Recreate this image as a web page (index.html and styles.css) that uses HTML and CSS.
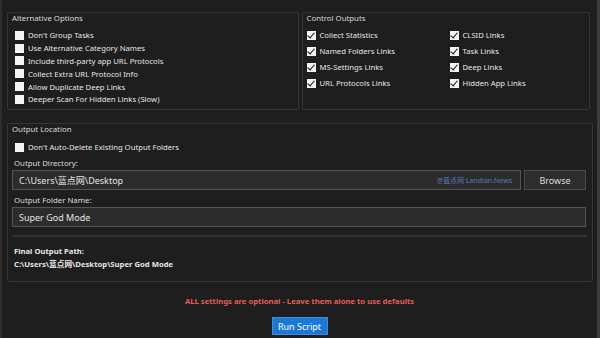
FILE: index.html
```html
<!DOCTYPE html>
<html lang="en">
<head>
    <meta charset="UTF-8">
    <title>Super God Mode</title>
    <link rel="stylesheet" href="styles.css">
</head>
<body>
    <div class="window">

        <!-- Top options -->
        <div class="top-row">
            <div class="group alt-options">
                <div class="group-title">Alternative Options</div>
                <div class="check-list">
                    <label class="check"><span class="box"></span>Don't Group Tasks</label>
                    <label class="check"><span class="box"></span>Use Alternative Category Names</label>
                    <label class="check"><span class="box"></span>Include third-party app URL Protocols</label>
                    <label class="check"><span class="box"></span>Collect Extra URL Protocol Info</label>
                    <label class="check"><span class="box"></span>Allow Duplicate Deep Links</label>
                    <label class="check"><span class="box"></span>Deeper Scan For Hidden Links (Slow)</label>
                </div>
            </div>

            <div class="group control-outputs">
                <div class="group-title">Control Outputs</div>
                <div class="check-grid">
                    <label class="check"><span class="box on"></span>Collect Statistics</label>
                    <label class="check"><span class="box on"></span>CLSID Links</label>
                    <label class="check"><span class="box on"></span>Named Folders Links</label>
                    <label class="check"><span class="box on"></span>Task Links</label>
                    <label class="check"><span class="box on"></span>MS-Settings Links</label>
                    <label class="check"><span class="box on"></span>Deep Links</label>
                    <label class="check"><span class="box on"></span>URL Protocols Links</label>
                    <label class="check"><span class="box on"></span>Hidden App Links</label>
                </div>
            </div>
        </div>

        <!-- Output location -->
        <div class="group output-location">
            <div class="group-title">Output Location</div>
            <label class="check single"><span class="box"></span>Don't Auto-Delete Existing Output Folders</label>

            <div class="field-label">Output Directory:</div>
            <div class="dir-row">
                <div class="text-input dir-input">
                    <span>C:\Users\蓝点网\Desktop</span>
                    <span class="watermark">@蓝点网 Landian.News</span>
                </div>
                <button type="button" class="browse-btn">Browse</button>
            </div>

            <div class="field-label">Output Folder Name:</div>
            <div class="text-input">Super God Mode</div>

            <div class="divider"></div>

            <div class="final-label">Final Output Path:</div>
            <div class="final-path">C:\Users\蓝点网\Desktop\Super God Mode</div>
        </div>

        <div class="notice">ALL settings are optional - Leave them alone to use defaults</div>

        <div class="actions">
            <button type="button" class="run-btn">Run Script</button>
        </div>
    </div>
</body>
</html>
```

FILE: styles.css
```css
/* General Reset */
* {
    margin: 0;
    padding: 0;
    box-sizing: border-box;
}

body {
    font-family: "Noto Sans", "Noto Sans CJK SC", sans-serif;
    background-color: #1e1e1e;
    color: #e2e2e2;
    width: 600px;
    height: 338px;
    overflow: hidden;
}

/* Window */
.window {
    height: 338px;
    padding: 12px 7px 0 7px;
    border-left: 2px solid #332c2a;
    border-right: 3px solid #3c3c3c;
    display: flex;
    flex-direction: column;
}

/* Group boxes */
.top-row {
    display: flex;
    gap: 3px;
    margin-left: -2px;
}

.group {
    border: 1px solid #363636;
    border-radius: 2px;
}

.group-title {
    font-size: 7.8px;
    line-height: 10px;
    padding: 0 0 0 4px;
    color: #dcdcdc;
}

.alt-options {
    width: 293px;
    height: 98px;
}

.control-outputs {
    width: 290px;
    height: 98px;
}

/* Checkboxes */
.check {
    display: flex;
    align-items: center;
    gap: 4px;
    font-size: 7.7px;
    color: #e6e6e6;
    white-space: nowrap;
}

.box {
    width: 9px;
    height: 9px;
    background-color: #f4f4f4;
    flex-shrink: 0;
    position: relative;
}

.box.on::after {
    content: "";
    position: absolute;
    left: 2px;
    top: 0px;
    width: 3px;
    height: 6px;
    border: solid #111;
    border-width: 0 1.6px 1.6px 0;
    transform: rotate(40deg);
}

.check-list {
    padding: 6px 0 0 7px;
}

.check-list .check {
    height: 12.8px;
}

.check-grid {
    display: grid;
    grid-template-columns: 143px 1fr;
    padding: 4px 0 0 4px;
}

.check-grid .check {
    height: 16px;
}

/* Output location */
.output-location {
    margin-top: 13px;
    margin-left: -2px;
    width: 586px;
    height: 159px;
    padding: 0 6px 0 4px;
}

.output-location .group-title {
    padding-left: 0;
}

.check.single {
    height: 12px;
    margin: 7px 0 0 3px;
}

.field-label {
    font-size: 7.8px;
    line-height: 10px;
    margin: 5px 0 2px 2px;
    color: #dcdcdc;
}

.dir-row {
    display: flex;
    gap: 3px;
}

.text-input {
    height: 20px;
    border: 1px solid #555;
    background-color: #2c2c2c;
    font-size: 9px;
    color: #e4e4e4;
    padding: 0 6px;
    display: flex;
    align-items: center;
}

.dir-input {
    flex: 1;
    justify-content: space-between;
}

.watermark {
    font-size: 7px;
    color: #5b78b8;
    padding-right: 2px;
}

.browse-btn {
    width: 62px;
    height: 20px;
    background-color: #2d2d2d;
    border: 1px solid #4a4a4a;
    color: #dcdcdc;
    font-family: "Noto Sans", sans-serif;
    font-size: 9px;
}

.divider {
    height: 2px;
    background-color: #333;
    margin: 8px -1px 0 0;
}

.final-label,
.final-path {
    font-size: 7.7px;
    font-weight: bold;
    color: #e6e6e6;
    margin-left: 2px;
}

.final-label {
    margin-top: 9px;
    line-height: 10px;
}

.final-path {
    margin-top: 3px;
    line-height: 10px;
}

/* Footer */
.notice {
    text-align: center;
    font-size: 7.7px;
    font-weight: bold;
    color: #e85a5a;
    margin-top: 14px;
    line-height: 10px;
}

.actions {
    display: flex;
    justify-content: center;
    margin-top: 11px;
}

.run-btn {
    width: 56px;
    height: 18px;
    background-color: #1a78d6;
    border: 1px solid #3a8ee0;
    color: white;
    font-family: "Noto Sans", sans-serif;
    font-size: 9px;
}
```
